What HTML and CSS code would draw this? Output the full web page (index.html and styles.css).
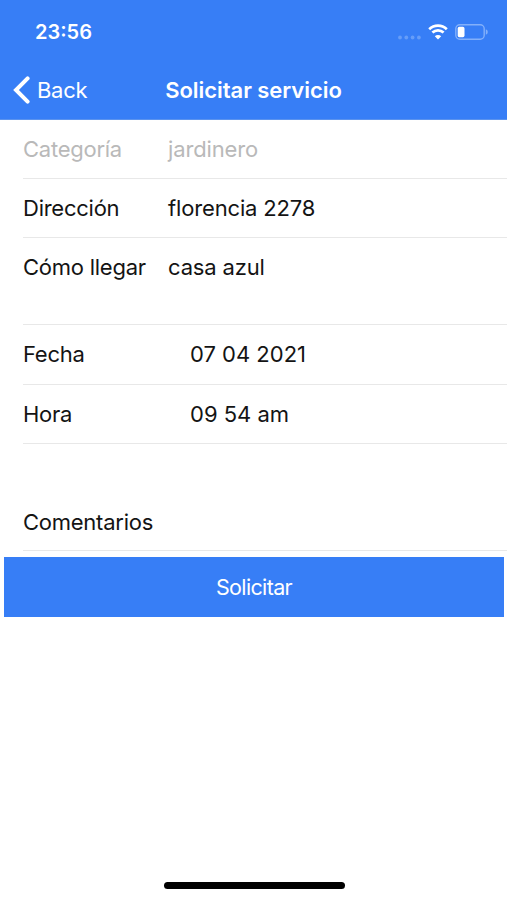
FILE: index.html
```
<!DOCTYPE html>
<html lang="es">
<head>
  <meta charset="UTF-8" />
  <title>Solicitar servicio</title>
  <link rel="stylesheet" href="styles.css">
</head>
<body>

  <header class="header">
    <div class="status-bar">
      <span class="time">23:56</span>
      <div class="status-icons">
        <svg class="signal" width="23" height="5" viewBox="0 0 23 5">
          <circle cx="2" cy="2.5" r="1.9" />
          <circle cx="8.3" cy="2.5" r="1.9" />
          <circle cx="14.6" cy="2.5" r="1.9" />
          <circle cx="20.9" cy="2.5" r="1.9" />
        </svg>
        <svg class="wifi" width="20" height="16" viewBox="0 0 20 16">
          <path d="M1.2 5.2a12.7 12.7 0 0 1 17.6 0" />
          <path d="M4.4 8.6a8.2 8.2 0 0 1 11.2 0" />
          <path class="wifi-dot" d="M10 15.5L6.8 12.2a4.6 4.6 0 0 1 6.4 0z" />
        </svg>
        <svg class="battery" width="33" height="16" viewBox="0 0 33 16">
          <rect class="battery-case" x=".8" y=".8" width="28.4" height="14.4" rx="4" />
          <rect class="battery-level" x="2.7" y="2.8" width="6.8" height="10.4" rx="1.6" />
          <path class="battery-tip" d="M30.8 5.2q2 .8 2 2.8t-2 2.8z" />
        </svg>
      </div>
    </div>
    <nav class="nav">
      <a class="back" href="#">
        <svg width="17" height="28" viewBox="0 0 17 28">
          <path d="M14.6 2.4L3 14l11.6 11.6" />
        </svg>
        <span>Back</span>
      </a>
      <h1 class="title">Solicitar servicio</h1>
    </nav>
  </header>

  <form class="form">
    <div class="row disabled">
      <span class="label">Categoría</span>
      <span class="value">jardinero</span>
    </div>
    <div class="row">
      <span class="label">Dirección</span>
      <span class="value">florencia 2278</span>
    </div>
    <div class="row tall">
      <span class="label">Cómo llegar</span>
      <span class="value">casa azul</span>
    </div>
    <div class="row">
      <span class="label">Fecha</span>
      <span class="value date">07 04 2021</span>
    </div>
    <div class="row">
      <span class="label">Hora</span>
      <span class="value date">09 54 am</span>
    </div>
    <div class="row comments">
      <span class="label">Comentarios</span>
    </div>
    <button class="submit" type="button">Solicitar</button>
  </form>

  <div class="home-indicator"></div>

</body>
</html>
```
FILE: styles.css
```
* {
  box-sizing: border-box;
}
body {
  display: flex;
  flex-direction: column;
  height: 900px;
  margin: 0;
  background: #fff;
  color: #141414;
  font-family: Inter, "Liberation Sans", sans-serif;
  font-size: 22px;
  overflow: hidden;
}
.header {
  height: 120px;
  background: #377ef6;
  border-bottom: 1px solid #5b93ee;
  color: #fff;
}
.status-bar {
  display: flex;
  justify-content: space-between;
  height: 60px;
  padding: 4px 19px 0 35px;
  align-items: center;
}
.time {
  font-size: 20px;
  font-weight: 600;
}
.status-icons {
  display: flex;
  align-items: center;
}
.signal {
  margin: 10px 7px 0 0;
  fill: #669df8;
}
.wifi {
  margin-right: 7px;
  fill: none;
  stroke: #fff;
  stroke-width: 2.7;
}
.wifi .wifi-dot {
  fill: #fff;
  stroke: none;
}
.battery-case {
  fill: none;
  stroke: #83b0fa;
  stroke-width: 1.4;
}
.battery-level {
  fill: #fff;
}
.battery-tip {
  fill: #83b0fa;
}
.nav {
  display: grid;
  grid-template-columns: 1fr auto 1fr;
  align-items: center;
  height: 59px;
  padding: 0 13px;
}
.back {
  display: flex;
  align-items: center;
  gap: 7px;
  color: #fff;
  text-decoration: none;
  letter-spacing: -0.3px;
}
.back svg {
  fill: none;
  stroke: #fff;
  stroke-width: 4;
  stroke-linecap: round;
}
.title {
  margin: 0;
  font-size: 22px;
  font-weight: 600;
  letter-spacing: -0.05px;
}
.form {
  display: flex;
  flex-direction: column;
}
.row {
  display: flex;
  height: 59.2px;
  margin-left: 23px;
  padding-top: 15px;
  border-bottom: 1px solid #e8e8e8;
  line-height: 28px;
  letter-spacing: -0.25px;
}
.label {
  width: 145px;
}
.value {
  letter-spacing: -0.15px;
}
.date {
  padding-left: 22px;
  letter-spacing: 0;
}
.disabled {
  color: #b9b9b9;
}
.tall {
  height: 87px;
}
.comments {
  height: 107px;
  padding-top: 64px;
}
.submit {
  height: 60px;
  margin: 6px 3px 0 4px;
  padding: 0;
  border: 0;
  background: #377ef6;
  color: #fff;
  font: inherit;
  font-size: 21.5px;
  letter-spacing: -0.65px;
}
.home-indicator {
  width: 181px;
  height: 7px;
  margin: auto 162px 11px 164px;
  border-radius: 4px;
  background: #000;
}
```
